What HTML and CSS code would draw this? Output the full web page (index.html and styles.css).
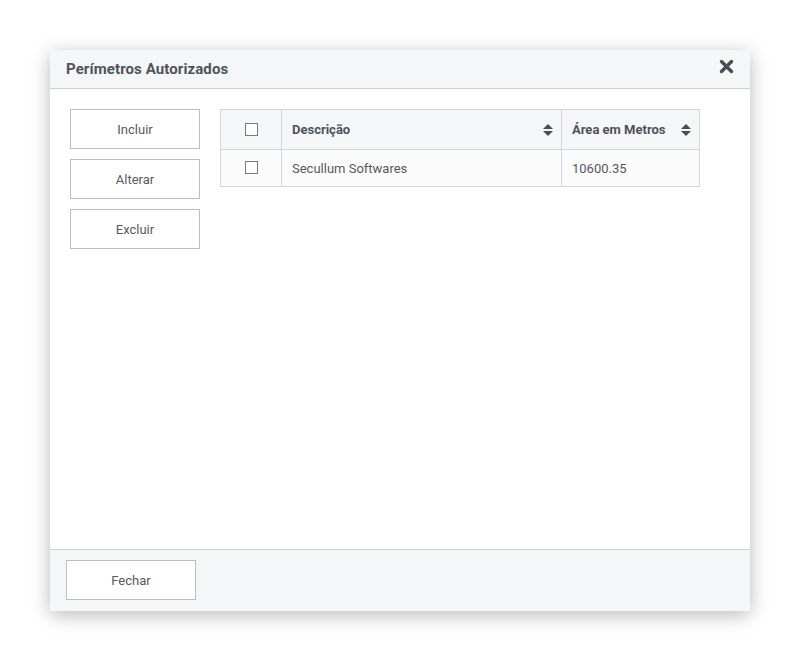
FILE: index.html
```html
<!DOCTYPE html>
<html lang="pt-BR">
<head>
  <meta charset="UTF-8">
  <title>Perímetros Autorizados</title>
  <link rel="stylesheet" href="styles.css">
</head>
<body>
  <div class="modal">
    <div class="modal-header">
      <span class="modal-title">Perímetros Autorizados</span>
      <button class="modal-close" aria-label="Fechar">
        <svg width="15" height="15" viewBox="0 0 15 15">
          <path d="M2.5 2.5 L12.5 12.5 M12.5 2.5 L2.5 12.5" stroke="#4a4d52" stroke-width="3.4" stroke-linecap="round"/>
        </svg>
      </button>
    </div>
    <div class="modal-body">
      <div class="actions">
        <button class="btn">Incluir</button>
        <button class="btn">Alterar</button>
        <button class="btn">Excluir</button>
      </div>
      <table class="grid">
        <thead>
          <tr>
            <th class="col-check"><span class="checkbox"></span></th>
            <th class="col-desc"><div class="th-inner">Descrição<span class="sort"></span></div></th>
            <th class="col-area"><div class="th-inner">Área em Metros<span class="sort"></span></div></th>
          </tr>
        </thead>
        <tbody>
          <tr>
            <td class="col-check"><span class="checkbox"></span></td>
            <td>Secullum Softwares</td>
            <td>10600.35</td>
          </tr>
        </tbody>
      </table>
    </div>
    <div class="modal-footer">
      <button class="btn">Fechar</button>
    </div>
  </div>
</body>
</html>
```

FILE: styles.css
```css
body {
  margin: 0;
  padding: 50px;
  background: #fff;
  font-family: Roboto, 'Liberation Sans', Arial, sans-serif;
  font-size: 13px;
  color: #555a60;
}
.modal {
  width: 700px;
  height: 561px;
  display: flex;
  flex-direction: column;
  background: #fff;
  box-shadow: 0 4px 18px rgba(0,0,0,0.28);
}
.modal-header {
  height: 38px;
  flex-shrink: 0;
  display: flex;
  align-items: center;
  justify-content: space-between;
  padding: 0 16px;
  background: #f5f6f8;
  border-bottom: 1px solid #cfd1d6;
}
.modal-title {
  font-size: 15px;
  font-weight: 700;
  letter-spacing: 0.1px;
  color: #4e535a;
}
.modal-close {
  border: none;
  background: none;
  padding: 0;
  margin-top: -5px;
  margin-right: 0;
  cursor: pointer;
  display: flex;
}
.modal-body {
  flex: 1;
  display: flex;
  align-items: flex-start;
  gap: 20px;
  padding: 20px;
}
.actions {
  display: flex;
  flex-direction: column;
  gap: 10px;
}
.btn {
  width: 130px;
  height: 40px;
  background: #fff;
  border: 1px solid #bdbdbd;
  font-family: inherit;
  font-size: 13px;
  color: #555a60;
  cursor: pointer;
}
.grid {
  width: 480px;
  border-collapse: collapse;
}
.grid th,
.grid td {
  border: 1px solid #d2d4d8;
  padding: 0 10px;
  text-align: left;
}
.grid th {
  height: 39px;
  background: #f5f6f8;
  font-weight: 700;
  color: #4e535a;
}
.grid td {
  height: 36px;
  background: #fbfbfb;
}
.grid .col-check {
  width: 60px;
  text-align: center;
  padding: 0;
}
.grid .col-area {
  width: 117px;
}
.th-inner {
  display: flex;
  align-items: center;
  justify-content: space-between;
}
.checkbox {
  display: inline-block;
  width: 11px;
  height: 11px;
  border: 1px solid #7a7a7a;
  background: #fff;
  vertical-align: middle;
  margin-top: -3px;
}
.sort {
  display: inline-flex;
  flex-direction: column;
  gap: 2px;
  margin-right: -2px;
}
.sort::before,
.sort::after {
  content: "";
  border-left: 5px solid transparent;
  border-right: 5px solid transparent;
}
.sort::before {
  border-bottom: 5px solid #4a4d52;
}
.sort::after {
  border-top: 5px solid #4a4d52;
}
.modal-footer {
  height: 62px;
  flex-shrink: 0;
  box-sizing: border-box;
  padding: 10px 16px;
  background: #f5f6f8;
  border-top: 1px solid #cfd1d6;
}
```
